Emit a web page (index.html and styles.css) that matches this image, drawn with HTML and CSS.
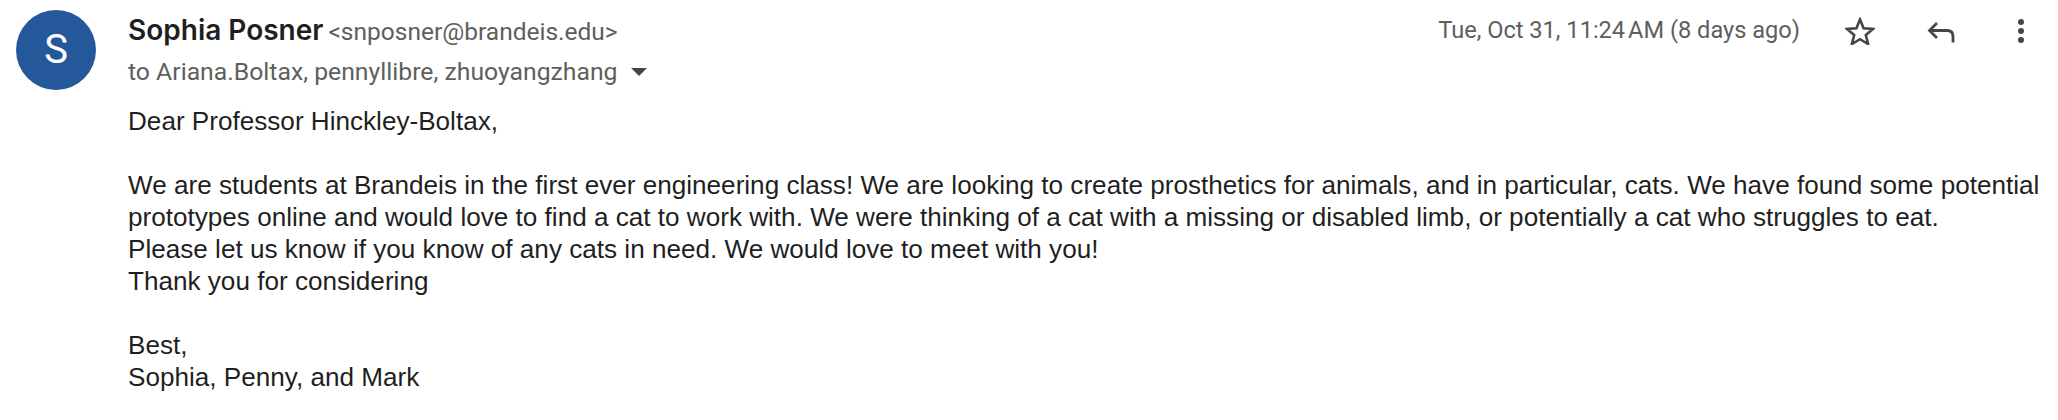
FILE: index.html
```html
<!DOCTYPE html>
<html lang="en">
<head>
    <meta charset="UTF-8">
    <meta name="viewport" content="width=device-width, initial-scale=1.0">
    <title>Message</title>
    <link rel="stylesheet" href="styles.css">
</head>
<body>

<div class="message">
    <div class="avatar">S</div>

    <div class="content">
        <div class="header">
            <div class="people">
                <div class="sender">
                    <span class="name">Sophia Posner</span>
                    <span class="address">&lt;snposner@brandeis.edu&gt;</span>
                </div>
                <div class="recipients">
                    <span>to Ariana.Boltax, pennyllibre, zhuoyangzhang</span>
                    <span class="caret"></span>
                </div>
            </div>

            <div class="meta">
                <span class="date">Tue, Oct 31, 11:24&#8239;AM (8 days ago)</span>
                <svg class="icon-star" width="30" height="28" viewBox="0 0 30 28">
                    <path d="M15 2.5L18.6 11.2L28 11.9L20.8 18L23.1 27L15 22.2L6.9 27L9.2 18L2 11.9L11.4 11.2Z" fill="none" stroke="#444746" stroke-width="2.6" stroke-linejoin="miter"/>
                </svg>
                <svg class="icon-reply" width="28" height="22" viewBox="0 0 28 22">
                    <path d="M10 2L2.5 9.5L10 17" fill="none" stroke="#444746" stroke-width="2.8"/>
                    <path d="M2.5 9.5H20Q26 9.5 26 15.5V21.5" fill="none" stroke="#444746" stroke-width="2.8"/>
                </svg>
                <svg class="icon-more" width="8" height="26" viewBox="0 0 8 26">
                    <circle cx="4" cy="4" r="3"/>
                    <circle cx="4" cy="13" r="3"/>
                    <circle cx="4" cy="22" r="3"/>
                </svg>
            </div>
        </div>

        <div class="body-text">
            <p>Dear Professor Hinckley-Boltax,</p>
            <p>We are students at Brandeis in the first ever engineering class! We are looking to create prosthetics for animals, and in particular, cats. We have found some potential<br>
            prototypes online and would love to find a cat to work with. We were thinking of a cat with a missing or disabled limb, or potentially a cat who struggles to eat.<br>
            Please let us know if you know of any cats in need. We would love to meet with you!<br>
            Thank you for considering</p>
            <p>Best,<br>
            Sophia, Penny, and Mark</p>
        </div>
    </div>
</div>

</body>
</html>
```

FILE: styles.css
```css
body {
    font-family: 'Roboto', sans-serif;
    background-color: #fff;
    margin: 0;
    overflow: hidden;
}

.message {
    display: flex;
    height: 420px;
    padding: 10px 0 0 16px;
    box-sizing: border-box;
}

.avatar {
    flex: none;
    width: 80px;
    height: 80px;
    border-radius: 50%;
    background-color: #25589a;
    color: #fff;
    font-size: 40px;
    line-height: 80px;
    text-align: center;
}

.content {
    flex: 1;
    margin-left: 32px;
}

.header {
    display: flex;
    justify-content: space-between;
}

.name {
    font-family: 'Inter', sans-serif;
    font-size: 28px;
    font-weight: 600;
    color: #1f1f1f;
}

.address {
    margin-left: 1px;
    font-size: 24.5px;
    color: #5e5e5e;
}

.sender {
    line-height: 32px;
    padding-top: 4px;
}

.recipients {
    display: flex;
    align-items: center;
    font-size: 24.75px;
    line-height: 32px;
    margin-top: 5px;
    color: #5e5e5e;
}

.caret {
    width: 0;
    height: 0;
    margin-left: 14px;
    border-left: 8px solid transparent;
    border-right: 8px solid transparent;
    border-top: 8px solid #444746;
}

.meta {
    display: flex;
    align-items: flex-start;
    padding-right: 33px;
}

.date {
    font-size: 23.6px;
    line-height: 32px;
    padding-top: 4px;
    color: #5e5e5e;
}

.icon-star {
    margin: 7px 0 0 45px;
}

.icon-reply {
    margin: 11px 0 0 52px;
}

.icon-more {
    margin: 8px 0 0 62px;
    fill: #444746;
}

.body-text {
    margin-top: 17px;
    font-family: 'Liberation Sans', Arial, sans-serif;
    font-size: 26.12px;
    line-height: 32px;
    color: #1f1f1f;
    white-space: nowrap;
}

.body-text p {
    margin: 0 0 32px;
}
```
